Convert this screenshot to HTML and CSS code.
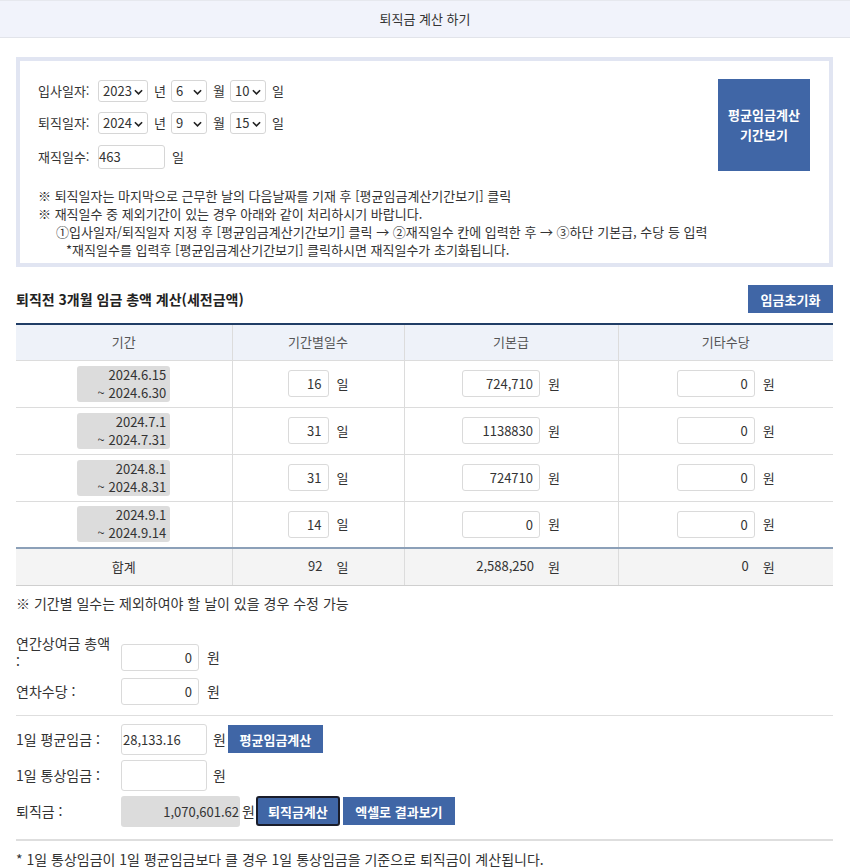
FILE: index.html
```html
<!DOCTYPE html>
<html lang="ko">
<head>
<meta charset="utf-8">
<title>퇴직금 계산 하기</title>
<link rel="stylesheet" href="styles.css">
</head>
<body>
<header class="topbar">퇴직금 계산 하기</header>
<main class="page">
  <section class="datebox">
    <div class="datebox-top">
      <div class="datefields">
        <div class="frow">
          <span class="flabel">입사일자:</span>
          <span class="sel w-year">2023<svg class="chev" viewBox="0 0 10 6"><path d="M1 1l4 4 4-4" fill="none" stroke="#222" stroke-width="1.8"/></svg></span>
          <span class="unit">년</span>
          <span class="sel w-mon">6<svg class="chev" viewBox="0 0 10 6"><path d="M1 1l4 4 4-4" fill="none" stroke="#222" stroke-width="1.8"/></svg></span>
          <span class="unit">월</span>
          <span class="sel w-day">10<svg class="chev" viewBox="0 0 10 6"><path d="M1 1l4 4 4-4" fill="none" stroke="#222" stroke-width="1.8"/></svg></span>
          <span class="unit">일</span>
        </div>
        <div class="frow">
          <span class="flabel">퇴직일자:</span>
          <span class="sel w-year">2024<svg class="chev" viewBox="0 0 10 6"><path d="M1 1l4 4 4-4" fill="none" stroke="#222" stroke-width="1.8"/></svg></span>
          <span class="unit">년</span>
          <span class="sel w-mon">9<svg class="chev" viewBox="0 0 10 6"><path d="M1 1l4 4 4-4" fill="none" stroke="#222" stroke-width="1.8"/></svg></span>
          <span class="unit">월</span>
          <span class="sel w-day">15<svg class="chev" viewBox="0 0 10 6"><path d="M1 1l4 4 4-4" fill="none" stroke="#222" stroke-width="1.8"/></svg></span>
          <span class="unit">일</span>
        </div>
        <div class="frow">
          <span class="flabel">재직일수:</span>
          <span class="daysinput">463</span>
          <span class="unit unit-days">일</span>
        </div>
      </div>
      <button class="btn btn-period">평균임금계산<br>기간보기</button>
    </div>
    <div class="notes">
      <p>※ 퇴직일자는 마지막으로 근무한 날의 다음날짜를 기재 후 [평균임금계산기간보기] 클릭</p>
      <p>※ 재직일수 중 제외기간이 있는 경우 아래와 같이 처리하시기 바랍니다.</p>
      <p class="ind1">①입사일자/퇴직일자 지정 후 [평균임금계산기간보기] 클릭 → ②재직일수 칸에 입력한 후 → ③하단 기본급, 수당 등 입력</p>
      <p class="ind2">*재직일수를 입력후 [평균임금계산기간보기] 클릭하시면 재직일수가 초기화됩니다.</p>
    </div>
  </section>

  <div class="sechead">
    <h2 class="sectitle">퇴직전 3개월 임금 총액 계산(세전금액)</h2>
    <button class="btn btn-reset">임금초기화</button>
  </div>

  <table class="wage">
    <thead>
      <tr><th class="c1">기간</th><th class="c2">기간별일수</th><th class="c3">기본급</th><th class="c4">기타수당</th></tr>
    </thead>
    <tbody>
      <tr>
        <td><span class="period">2024.6.15<br>~ 2024.6.30</span></td>
        <td><span class="inp inp-day">16</span><span class="u">일</span></td>
        <td><span class="inp inp-money">724,710</span><span class="u">원</span></td>
        <td><span class="inp inp-money">0</span><span class="u">원</span></td>
      </tr>
      <tr>
        <td><span class="period">2024.7.1<br>~ 2024.7.31</span></td>
        <td><span class="inp inp-day">31</span><span class="u">일</span></td>
        <td><span class="inp inp-money">1138830</span><span class="u">원</span></td>
        <td><span class="inp inp-money">0</span><span class="u">원</span></td>
      </tr>
      <tr>
        <td><span class="period">2024.8.1<br>~ 2024.8.31</span></td>
        <td><span class="inp inp-day">31</span><span class="u">일</span></td>
        <td><span class="inp inp-money">724710</span><span class="u">원</span></td>
        <td><span class="inp inp-money">0</span><span class="u">원</span></td>
      </tr>
      <tr>
        <td><span class="period">2024.9.1<br>~ 2024.9.14</span></td>
        <td><span class="inp inp-day">14</span><span class="u">일</span></td>
        <td><span class="inp inp-money">0</span><span class="u">원</span></td>
        <td><span class="inp inp-money">0</span><span class="u">원</span></td>
      </tr>
    </tbody>
    <tfoot>
      <tr>
        <td>합계</td>
        <td><span class="tot tot-day">92</span><span class="u">일</span></td>
        <td><span class="tot tot-money">2,588,250</span><span class="u">원</span></td>
        <td><span class="tot tot-money">0</span><span class="u">원</span></td>
      </tr>
    </tfoot>
  </table>

  <p class="daynote">※ 기간별 일수는 제외하여야 할 날이 있을 경우 수정 가능</p>

  <div class="extra">
    <div class="xrow xrow-top">
      <span class="xlabel xlabel-two">연간상여금 총액<br>:</span>
      <span class="inp inp-money xinp">0</span><span class="u xu">원</span>
    </div>
    <div class="xrow">
      <span class="xlabel">연차수당 :</span>
      <span class="inp inp-money xinp">0</span><span class="u">원</span>
    </div>
  </div>

  <hr class="line">

  <div class="result">
    <div class="rrow">
      <span class="xlabel">1일 평균임금 :</span>
      <span class="rinp rinp-left">28,133.16</span><span class="ru">원</span>
      <button class="btn btn-sm btn-avg">평균임금계산</button>
    </div>
    <div class="rrow">
      <span class="xlabel">1일 통상임금 :</span>
      <span class="rinp"></span><span class="ru">원</span>
    </div>
    <div class="rrow">
      <span class="xlabel">퇴직금 :</span>
      <span class="rgray">1,070,601.62</span><span class="ru2">원</span>
      <button class="btn btn-sm btn-calc">퇴직금계산</button>
      <button class="btn btn-sm btn-excel">엑셀로 결과보기</button>
    </div>
  </div>

  <hr class="line line2">
  <p class="foot">* 1일 통상임금이 1일 평균임금보다 클 경우 1일 통상임금을 기준으로 퇴직금이 계산됩니다.</p>
</main>
</body>
</html>
```

FILE: styles.css
```css
* { box-sizing: border-box; }
html, body { margin: 0; padding: 0; background: #fff; }
body {
  font-family: "Noto Sans CJK KR", "Noto Sans", sans-serif;
  font-size: 13px;
  color: #333;
  line-height: 18px;
  width: 850px;
  height: 868px;
  overflow: hidden;
}
p { margin: 0; }

.topbar {
  height: 38px;
  background: #f1f3fb;
  border-top: 1px solid #e6e8ee;
  border-bottom: 1px solid #e2e4ea;
  text-align: center;
  line-height: 36px;
  font-size: 13px;
  color: #333;
}

.page { padding: 19px 17px 0 16px; }

.datebox {
  border: 4px solid #e1e5f2;
  height: 210px;
  padding: 19px 19px 0 18px;
}
.datebox-top { display: flex; justify-content: space-between; }
.datefields { display: flex; flex-direction: column; gap: 10px; }
.frow { display: flex; align-items: center; height: 22px; }
.flabel { width: 60px; }
.sel {
  position: relative;
  display: inline-flex;
  align-items: center;
  height: 22px;
  border: 1px solid #d6d6d6;
  border-radius: 3px;
  padding-left: 4px;
  background: #fff;
}
.chev { position: absolute; right: 4px; top: 8px; width: 9px; height: 6px; }
.w-year { width: 50px; }
.w-mon { width: 36px; }
.w-day { width: 36px; }
.unit { display: inline-block; margin: 0 5px 0 6px; }
.daysinput {
  display: inline-flex;
  align-items: center;
  width: 67px;
  height: 24px;
  border: 1px solid #d6d6d6;
  border-radius: 3px;
}
.frow:last-child { margin-top: 2px; }
.unit-days { margin-left: 7px; }

.btn {
  font-family: inherit;
  background: #4066a6;
  color: #fff;
  border: 1px solid #4066a6;
  font-weight: bold;
  font-size: 13px;
  cursor: pointer;
  padding: 0;
}
.btn-period {
  width: 92px;
  height: 92px;
  margin-top: -1px;
  line-height: 20px;
}

.notes { margin-top: 16px; font-size: 13px; line-height: 18px; }
.ind1 { padding-left: 18px; }
.ind2 { padding-left: 28px; }

.sechead {
  display: flex;
  justify-content: space-between;
  align-items: center;
  margin-top: 18px;
  height: 28px;
}
.sectitle { margin: 0; font-size: 14px; font-weight: bold; color: #222; }
.btn-reset { width: 85px; height: 28px; }

.wage {
  margin-top: 10px;
  width: 817px;
  border-collapse: collapse;
  table-layout: fixed;
  border-top: 2px solid #203d66;
}
.c1 { width: 216px; }
.c2 { width: 172px; }
.c3 { width: 214px; }
.c4 { width: 215px; }
.wage th {
  height: 36px;
  background: #eef2f9;
  font-weight: normal;
  color: #555;
  border-left: 1px solid #dcdcdc;
  border-bottom: 1px solid #dcdcdc;
}
.wage td {
  height: 47px;
  text-align: center;
  border-left: 1px solid #dcdcdc;
  border-bottom: 1px solid #dcdcdc;
  padding: 0;
}
.wage th:first-child, .wage td:first-child { border-left: none; }
.wage tfoot td {
  height: 37px;
  background: #f4f4f4;
  border-top: 2px solid #8ca0b8;
  border-bottom: 1px solid #cfcfcf;
}
.period {
  display: inline-block;
  background: #dcdcdc;
  border-radius: 3px;
  text-align: right;
  width: 93px;
  padding: 0 4px;
  line-height: 18px;
  vertical-align: middle;
}
.inp {
  display: inline-block;
  height: 27px;
  line-height: 25px;
  border: 1px solid #dadada;
  border-radius: 3px;
  text-align: right;
  padding-right: 6px;
  vertical-align: middle;
  background: #fff;
}
.inp-day { width: 41px; }
.inp-money { width: 78px; }
.u { display: inline-block; margin-left: 8px; width: 12px; vertical-align: middle; }
.tot { display: inline-block; text-align: right; padding-right: 6px; }
.tot-day { width: 41px; }
.tot-money { width: 78px; }

.daynote { margin-top: 8px; line-height: 18px; font-size: 14px; }

.extra { margin-top: 18px; display: flex; flex-direction: column; gap: 7px; font-size: 14px; }
.extra .inp { font-size: 13px; }
.xrow { display: flex; align-items: center; }
.xlabel { width: 105px; line-height: 18px; font-size: 14px; }
.xrow-top { align-items: flex-start; }
.xlabel-two { margin-top: 4px; }
.xrow-top .xinp { margin-top: 14px; }
.xrow-top .xu { margin-top: 18px; }

.line { border: none; border-top: 1px solid #dedede; margin: 10px 0 0 0; width: 817px; }
.line2 { border-top-width: 2px; margin-top: 12px; }

.result { margin-top: 8px; display: flex; flex-direction: column; gap: 5px; font-size: 14px; }
.rrow { display: flex; align-items: center; height: 31px; }
.rinp {
  display: inline-block;
  width: 86px;
  height: 31px;
  border: 1px solid #dadada;
  border-radius: 3px;
  background: #fff;
  font-size: 13px;
}
.rinp-left { line-height: 29px; padding-left: 1px; color: #333; }
.ru { margin-left: 6px; margin-right: 2px; }
.rgray {
  display: inline-block;
  width: 119px;
  height: 31px;
  line-height: 31px;
  background: #dcdcdc;
  border-radius: 3px;
  text-align: right;
  padding-right: 1px;
  font-size: 13px;
}
.ru2 { margin-left: 2px; margin-right: 1px; }
.btn-sm { height: 28px; padding: 0 8px; }
.btn-avg { width: 95px; }
.btn-calc { width: 84px; height: 30px; border: 2px solid #1a1d2b; border-radius: 3px; }
.btn-excel { width: 112px; margin-left: 3px; }

.foot { margin-top: 9px; line-height: 18px; font-size: 14px; }
```
